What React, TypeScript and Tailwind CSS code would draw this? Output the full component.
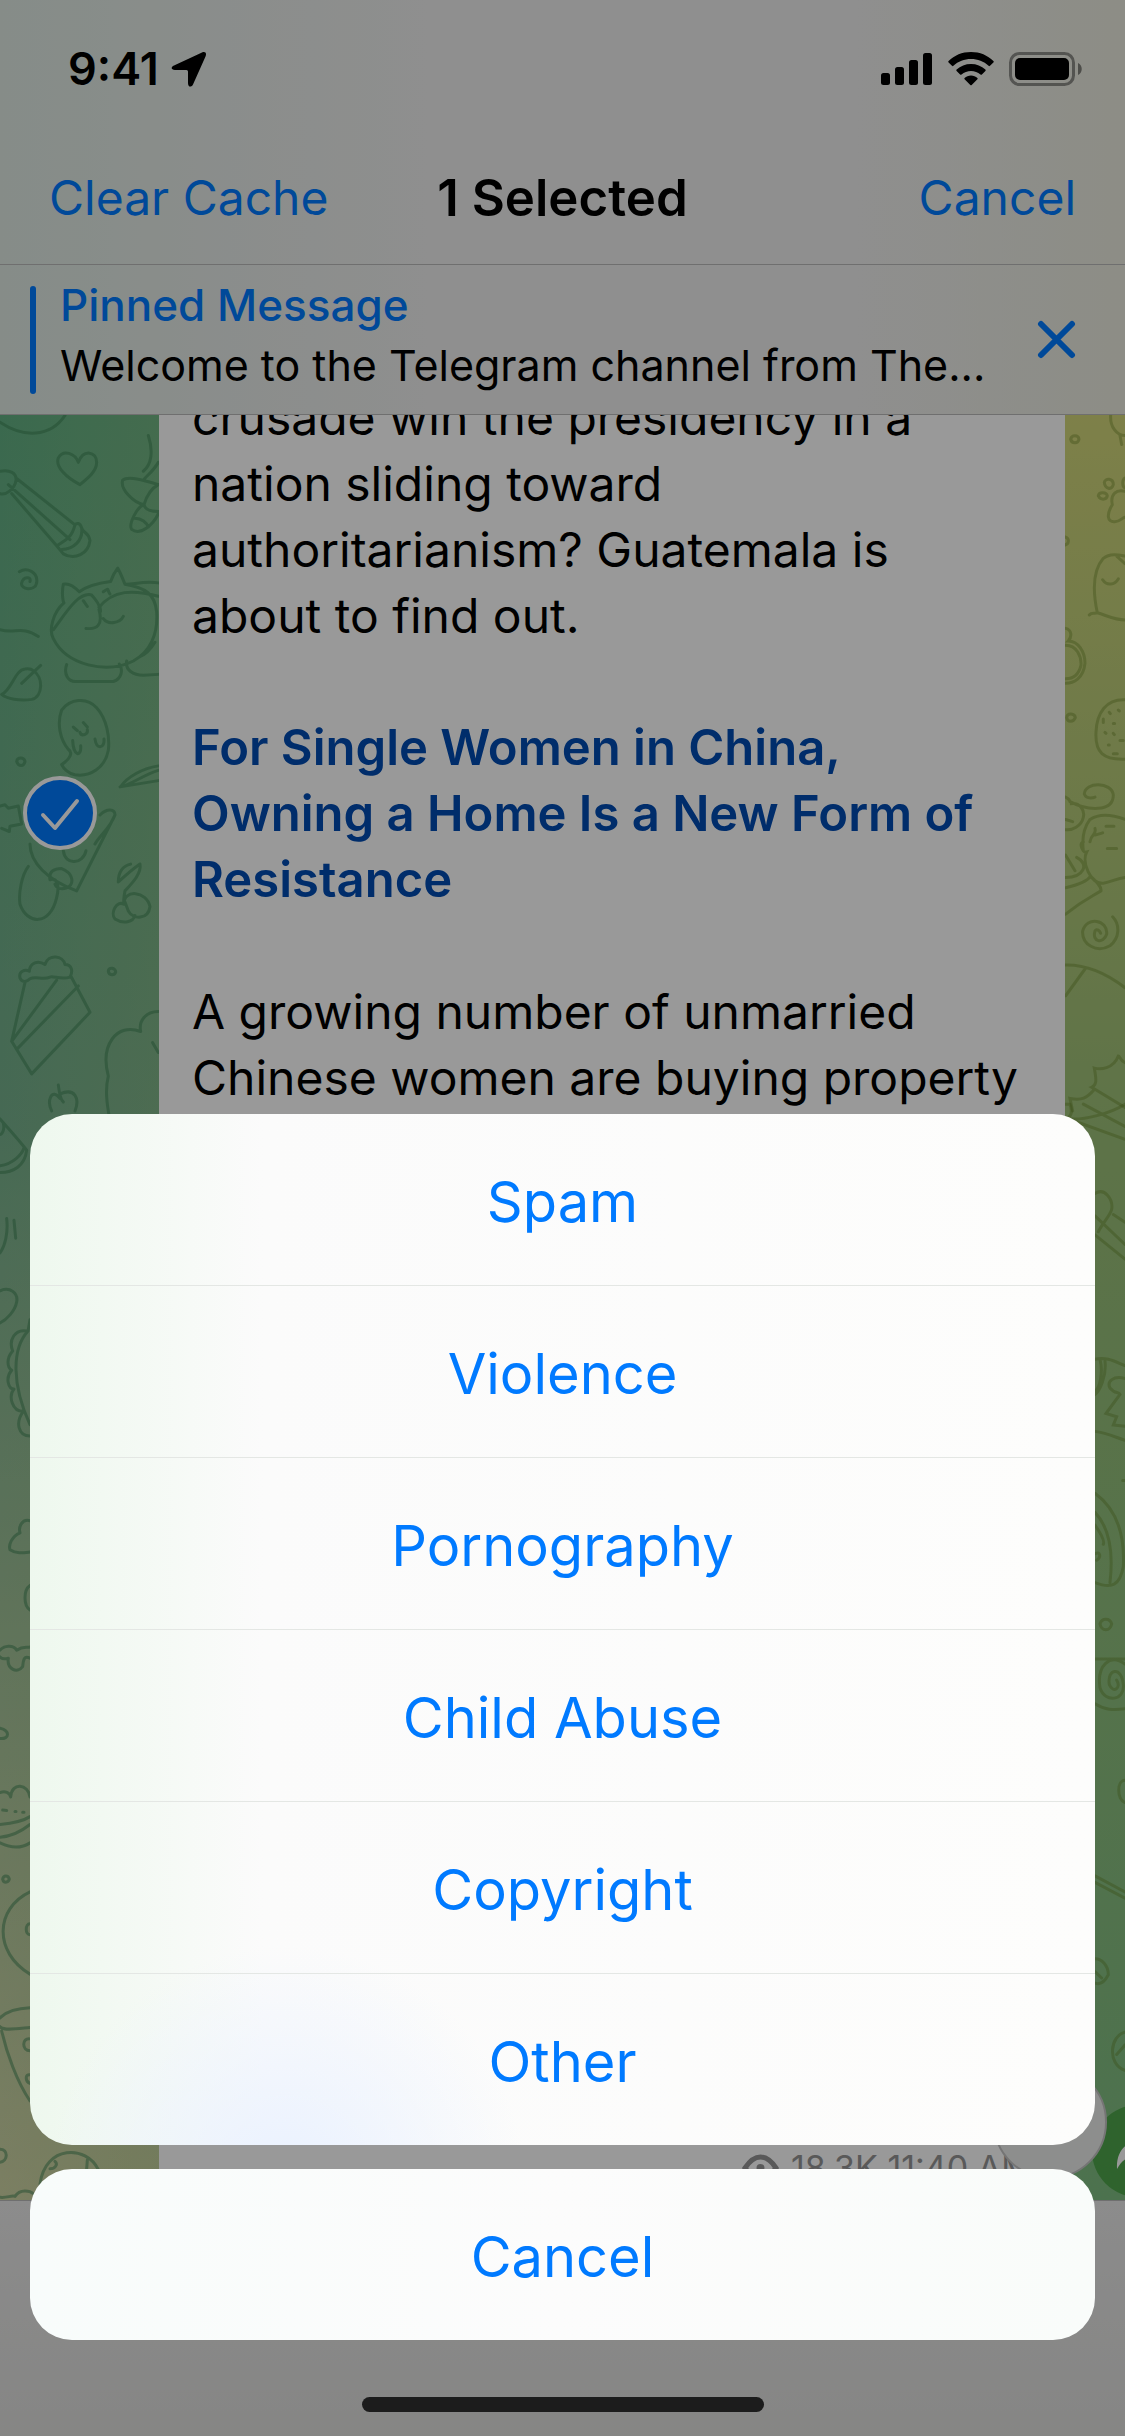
import { useState } from 'react';

const reasons = ['Spam', 'Violence', 'Pornography', 'Child Abuse', 'Copyright', 'Other'];

const StatusBar = () => (
  <div className="flex h-[138px] items-center justify-between pl-[68px] pr-[42px]">
    <div className="flex items-center gap-3">
      <span className="text-[45px] leading-[52px] font-semibold">9:41</span>
      <svg width="36" height="36" viewBox="0 0 36 36" aria-hidden="true">
        <path
          d="M31 1.5 3 14.5C-.5 16.200 0 19 4 19H15.500Q17 19 17 20.500V32C17 36.500 20.500 36.500 22 33.500L34.500 5.500C36 2 34 0 31 1.500Z"
          fill="#000"
        />
      </svg>
    </div>
    <div className="flex items-center gap-[15px]">
      <svg width="52" height="34" viewBox="0 0 52 34" aria-hidden="true">
        <rect x="0" y="21" width="9" height="12" rx="2.500" />
        <rect x="14" y="15" width="9" height="18" rx="2.500" />
        <rect x="28" y="8" width="9" height="25" rx="2.500" />
        <rect x="42" y="1" width="9" height="32" rx="2.500" />
      </svg>
      <svg width="46" height="34" viewBox="0 0 46 34" aria-hidden="true">
        <path d="M23 0C14 0 6.500 3.300.600 9a1 1 0 0 0 0 1.400L4 13.800a1 1 0 0 0 1.400 0C10.200 9.300 16.300 7 23 7s12.800 2.300 17.600 6.800a1 1 0 0 0 1.400 0l3.400-3.400a1 1 0 0 0 0-1.400C39.500 3.300 32 0 23 0Z" />
        <path d="M23 12c-5.500 0-10.500 2-14.400 5.600a1 1 0 0 0 0 1.400l3.500 3.500a1 1 0 0 0 1.400 0C16.200 20.200 19.500 19 23 19s6.800 1.200 9.500 3.500a1 1 0 0 0 1.400 0l3.500-3.500a1 1 0 0 0 0-1.400C33.500 14 28.500 12 23 12Z" />
        <path d="M23 23.500c-2.500 0-4.700.900-6.400 2.400a1 1 0 0 0 0 1.400l5.700 5.700a1 1 0 0 0 1.400 0l5.700-5.700a1 1 0 0 0 0-1.400c-1.700-1.500-3.900-2.400-6.400-2.400Z" />
      </svg>
      <svg width="74" height="34" viewBox="0 0 74 34" aria-hidden="true">
        <rect x="1.500" y="1.500" width="63" height="31" rx="9" fill="none" stroke="#000" strokeOpacity=".4" strokeWidth="3" />
        <rect x="6" y="6" width="54" height="22" rx="5" />
        <path d="M69 11c5 2 5 10 0 12Z" fillOpacity=".45" />
      </svg>
    </div>
  </div>
);

const Wallpaper = () => (
  <div className="absolute inset-0 flex justify-between" aria-hidden="true">
    <div className="w-1/2 bg-linear-to-b from-[#62b083] via-[#76b08c] to-[#ced4a4] via-40%">
      <svg
        width="159"
        height="1786"
        viewBox="0 414 159 1786"
        fill="none"
        stroke="#3a7f52"
        strokeOpacity=".5"
        strokeLinecap="round"
        strokeLinejoin="round"
        className="[&_path]:[stroke-width:3px] [&_path]:[vector-effect:non-scaling-stroke]"
      >
        <rect x="0" y="414" width="159" height="1786" fill="url(#leftGlow)" stroke="none" />
        <defs>
          <linearGradient id="leftGlow">
            <stop offset="0" stopColor="#a0c080" stopOpacity="0" />
            <stop offset="1" stopColor="#a0c080" stopOpacity=".25" />
          </linearGradient>
        </defs>
        <g transform="translate(0 410) scale(.3333 .4464)">
          <path d="M0 25C70 60 150 60 195 10M240 165C200 150 165 125 175 105C190 85 225 95 235 115C250 85 290 90 290 115C290 135 265 150 240 165Z" />
          <path d="M0 135C30 130 50 140 48 155C45 175 15 190 0 185M48 150L225 255M35 185L170 302M25 165L210 288M225 255C215 285 195 290 170 302L190 320C225 335 265 320 270 290C265 270 250 275 245 262C240 250 230 250 225 255M245 262C250 290 220 310 185 310" />
          <path d="M445 55C460 90 455 120 430 135M475 115C460 135 440 145 430 155M475 165C430 155 385 145 368 155C360 175 400 205 432 210C440 190 450 175 475 165M475 225C450 225 435 220 432 210C410 215 385 255 395 265C420 280 460 255 475 230M405 240C425 240 440 250 445 260" />
          <path d="M58 360C80 350 115 360 110 385C105 405 60 400 65 385C70 370 95 370 90 382M0 490C45 500 65 480 115 505" />
          <path d="M475 385C430 380 395 390 375 388C365 370 360 360 353 352C340 365 335 375 332 382C300 385 265 390 238 405C225 395 205 385 190 388C185 405 188 425 192 430C160 450 145 490 160 510C200 570 320 590 400 560C450 540 475 500 470 450C465 410 435 395 375 388M160 490C200 450 235 405 275 412C290 425 300 435 297 440C340 400 400 400 475 415M310 405C330 395 320 400 330 410M250 425L262 438M298 435C305 450 300 455 297 445C310 480 290 490 258 487M310 465C325 480 360 475 370 460M200 568C190 590 205 608 230 606H340C365 600 370 580 358 567M380 560C375 580 400 592 430 592L475 590M420 550C440 545 455 530 465 518" />
          <path d="M65 610L122 570M100 582C130 595 130 640 95 646C60 650 20 645 5 635C35 625 45 580 75 578C85 577 95 578 100 582" />
          <path d="M185 792C210 780 220 765 205 758C180 735 170 700 185 670C210 645 260 640 290 665C320 690 330 730 325 760C315 800 270 820 225 815C205 812 190 800 185 792M220 708L232 716M250 698L262 708M240 720C245 730 265 725 262 714M218 738C220 775 245 775 242 750M285 735C290 760 315 755 312 735" />
          <path d="M50 785C52 775 72 775 75 785C72 797 55 797 50 785M475 795C430 800 380 820 362 842C400 835 430 815 475 805M360 842L475 828" />
          <path d="M0 885L15 882L25 890L55 885L60 905L65 925L30 930L28 942L5 935M90 970C90 1010 140 1050 230 1075L345 905C345 890 320 890 300 905M345 905C330 935 300 950 285 970M85 1020C65 1040 55 1080 60 1105C80 1150 150 1155 170 1090C180 1060 170 1045 150 1050C145 1030 165 1025 185 1025C220 1035 225 1060 200 1068C185 1072 170 1070 165 1060M190 985C195 1020 250 1015 258 985" />
          <path d="M375 1075C400 1055 425 1035 420 1015C400 1025 385 1035 355 1055C355 1035 365 1020 392 1015M375 1075C370 1095 370 1100 372 1105C350 1095 330 1125 345 1138C370 1150 400 1145 405 1130M372 1105C370 1070 440 1075 450 1110C445 1140 400 1140 385 1120L375 1100" />
          <path d="M60 1270C55 1255 75 1250 88 1255C90 1235 115 1230 135 1240C145 1215 190 1220 195 1240C215 1240 220 1255 210 1268C185 1275 160 1265 150 1268C130 1275 105 1265 90 1272C80 1280 65 1280 60 1270M75 1280L35 1412L95 1485L270 1347L212 1265M35 1412L170 1275M50 1430L235 1288" />
          <path d="M325 1255C325 1245 348 1247 347 1257C343 1265 327 1265 325 1255M475 1345C440 1345 415 1365 422 1390C350 1370 300 1420 325 1490C315 1520 320 1550 330 1590M458 1415L475 1437" />
          <path d="M175 1510C180 1540 185 1545 190 1548M180 1540C155 1515 140 1545 155 1568M180 1530C225 1515 240 1540 225 1568" />
        </g>
        <g transform="translate(0 1080) scale(.3333 .4464)">
          <path d="M0 85C30 110 70 145 80 155C75 190 40 205 0 205M0 190C40 185 65 165 72 150M10 95C15 110 5 120 0 120M20 308C25 340 15 370 0 385M42 312L47 352M0 470C30 460 55 475 50 495C45 515 20 535 0 542" />
          <path d="M90 535L84 560C35 600 35 680 90 770M80 560C45 555 25 580 38 605C20 620 20 640 35 648C15 665 25 690 42 690C25 705 35 740 70 740C45 765 55 795 90 795M90 985C65 980 55 1000 60 1012C35 1020 25 1040 30 1050C50 1060 70 1057 90 1055M90 1130C70 1140 70 1175 90 1185" />
          <path d="M0 1275C10 1265 40 1262 50 1275C70 1265 80 1270 90 1268M90 1293C70 1285 70 1300 68 1312C50 1330 20 1315 25 1293C15 1295 5 1295 0 1290M0 1450C30 1455 30 1475 0 1473" />
        </g>
        <g transform="translate(0 1750) scale(.3333 .4375)">
          <path d="M0 95C15 90 30 95 32 105C35 70 85 75 90 105M0 168C40 165 70 160 90 150M0 197C40 195 70 180 90 168M0 210C40 225 70 220 90 210M8 135L20 136M45 138H48M68 140H72M8 293C10 283 25 283 28 293C25 302 10 302 8 293M90 322C-15 360-20 460 90 510M90 395C75 395 75 420 90 420M0 610C20 595 55 588 90 587M0 630C10 640 50 635 90 632M5 640C20 690 50 755 90 800M90 658C65 655 65 685 90 685M90 740C75 738 75 755 90 760" />
          <path d="M120 990C135 900 260 900 295 957M150 955C165 955 175 945 165 938M262 935L260 955M0 910C25 910 25 938 0 940M0 1020C20 1022 35 1015 45 1018C60 1000 90 1005 100 1012" />
        </g>
      </svg>
    </div>
    <div className="flex w-1/2 justify-end bg-linear-to-b from-[#d2d67a] via-[#9cc078] to-[#7fbf83] via-40%">
      <svg
        width="60"
        height="1786"
        viewBox="1065 414 60 1786"
        fill="none"
        stroke="#5c7a1e"
        strokeOpacity=".35"
        strokeLinecap="round"
        className="[&_path]:[stroke-width:3px] [&_path]:[vector-effect:non-scaling-stroke]"
      >
        <g transform="translate(900 410) scale(.3333 .4464)">
          <path d="M632 10C630 35 650 55 675 55M660 55L665 75M512 63C515 53 535 53 537 63C535 74 515 74 512 63M613 160C615 150 640 150 640 165C635 178 615 175 613 160M595 190C597 180 620 182 622 190C620 200 600 200 595 190M675 150C665 155 667 170 675 172M675 180C650 175 630 185 637 210C620 230 620 250 645 248C660 248 665 240 675 238M495 282C510 285 507 298 495 300" />
          <path d="M568 457C575 450 585 455 592 452C580 410 575 360 610 330C630 318 655 322 675 325M650 325L675 342M592 452C620 458 645 468 675 468M608 378C620 392 645 390 655 376M497 487C515 490 517 505 505 515C535 515 555 540 555 565C550 600 520 610 497 610M497 525C530 525 545 550 543 570C535 595 515 600 497 600M500 687C502 675 525 677 526 687C520 698 503 698 500 687" />
          <path d="M675 647C620 645 590 675 588 720C585 765 610 782 675 780M628 675L631 678M655 670L658 672M640 700H644M615 720L618 722M640 722L643 725M660 738H670M625 748H628M640 768H652M610 690V698" />
          <path d="M497 865C512 870 512 880 510 880C540 875 555 895 550 910C545 930 515 940 497 938M497 915L518 920M510 875C560 895 640 900 640 860C635 830 555 830 553 858C560 872 585 865 585 865M675 915C640 905 600 900 570 915C550 935 545 955 550 985M550 965C535 970 550 990 560 988C545 1010 570 1060 610 1058C635 1055 650 1047 675 1045M570 965C575 945 590 950 585 935M585 950L608 945M618 930H642M622 980H650M530 1000C570 1015 550 1045 497 1045M497 1068C545 1060 565 1050 572 1042C590 1055 605 1065 603 1075C570 1090 550 1095 497 1127M497 995L525 1030" />
          <path d="M638 1133C660 1150 660 1180 630 1198C590 1215 545 1195 548 1165C560 1130 625 1140 620 1172C610 1195 575 1190 585 1165C590 1158 600 1165 602 1170M497 1241C560 1240 620 1260 675 1292M497 1310L555 1250M675 1460C660 1455 660 1445 655 1445C640 1475 600 1475 583 1472C590 1500 590 1510 575 1515L675 1560M583 1520C560 1540 545 1545 510 1540L518 1568" />
        </g>
        <g transform="translate(1050 1100) scale(.3333 .6378)">
          <path d="M45 5H60C70 20 60 25 50 27L225 60M60 28C100 30 180 20 225 5M100 5L225 40M135 145C165 135 190 155 185 170C180 180 160 190 145 205M135 180L225 225M135 210L225 248M190 178L225 190" />
          <path d="M135 405C170 400 200 410 225 415M150 405C160 425 150 450 135 455M165 408C170 430 150 455 135 460M135 518C170 520 200 528 225 532M225 435C190 430 170 440 180 450C195 460 205 455 210 460L168 490L200 495L190 508L225 510M218 595H225M135 615C200 640 225 680 220 730C210 760 185 765 135 755M135 645C180 670 190 710 180 755M135 665C155 680 165 690 160 695M135 710C150 705 155 715 140 720" />
          <path d="M150 820C155 810 180 810 185 820C180 832 155 832 150 820M135 875H225M135 945C165 955 190 955 225 953M225 883C180 865 140 885 150 920C165 945 225 940 220 915C215 885 170 890 178 915C190 930 215 920 200 908M225 1065C200 1065 200 1095 225 1100M135 1215L225 1240M135 1225L225 1250M135 1345C155 1345 175 1355 175 1370C160 1385 145 1385 135 1383M135 1365L155 1375M225 1460C180 1465 170 1510 225 1520M225 1480L200 1495" />
        </g>
      </svg>
    </div>
  </div>
);

export default function App() {
  const [selected, setSelected] = useState(true);

  return (
    <div className="relative flex min-h-screen flex-col overflow-hidden bg-white font-['Inter','Liberation_Sans',sans-serif] text-black">
      {/* Header */}
      <header className="relative z-10 bg-[linear-gradient(to_right,#dfeae3,#eeeeee_38%,#eeeeee_76%,#ebecdf)]">
        <StatusBar />
        <div className="grid h-[127px] grid-cols-[1fr_auto_1fr] items-center border-b border-[#b9b9b9] px-[49px] pb-[6px] text-[48px]">
          <button className="justify-self-start text-[#007aff]">Clear Cache</button>
          <h1 className="text-[51px] font-semibold">1 Selected</h1>
          <button className="justify-self-end text-[#007aff]">Cancel</button>
        </div>
        <div className="flex h-[150px] items-center border-b border-[#b9b9b9] pl-[30px] pr-[49px]">
          <div className="h-[108px] w-[6px] rounded-full bg-[#007aff]" />
          <div className="ml-6 min-w-0 flex-1 pb-[10px] text-[43px] leading-[60px]">
            <p className="text-[44px] font-medium text-[#007aff]">Pinned Message</p>
            <p className="whitespace-nowrap">Welcome to the Telegram channel from The...</p>
          </div>
          <button aria-label="Close pinned message">
            <svg width="39" height="39" viewBox="0 0 39 39" stroke="#007aff" strokeWidth="6" strokeLinecap="round">
              <path d="M4 4l31 31M35 4 4 35" />
            </svg>
          </button>
        </div>
      </header>

      {/* Chat */}
      <main className="relative flex min-h-0 flex-1 overflow-hidden">
        <Wallpaper />
        <div className="relative w-[159px] shrink-0 pl-[23px] pt-[361px]">
          <label className="relative block size-[74px]">
            <input
              type="checkbox"
              aria-label="Select message"
              checked={selected}
              onChange={() => setSelected(!selected)}
              className="block size-[74px] appearance-none rounded-full border-4 border-white checked:bg-[#007aff]"
            />
            <svg
              className="pointer-events-none absolute inset-0"
              width="74"
              height="74"
              viewBox="0 0 74 74"
              fill="none"
              stroke="#fff"
              strokeWidth="4"
              strokeLinecap="round"
              strokeLinejoin="round"
            >
              <path d="M20 39l12 13 22-27" />
            </svg>
          </label>
        </div>
        <article className="relative mr-[60px] -mt-[30px] flex min-w-0 flex-1 flex-col justify-between bg-white px-[33px] pb-3 text-[48px] leading-[66px] whitespace-nowrap">
          <div>
            <p>
              crusade win the presidency in a<br />
              nation sliding toward<br />
              authoritarianism? Guatemala is<br />
              about to find out.
            </p>
            <a href="#article" className="my-[66px] block text-[49px] font-semibold text-[#004bb2]">
              For Single Women in China,<br />
              Owning a Home Is a New Form of<br />
              Resistance
            </a>
            <p>
              A growing number of unmarried<br />
              Chinese women are buying property
            </p>
          </div>
          <div className="flex items-center justify-end gap-3 text-[34px] leading-10 text-[#959595]">
            <svg width="37" height="28" viewBox="0 0 37 28" fill="none" stroke="#959595" strokeWidth="5">
              <path d="M3 14C9 5 14 3 18.500 3S28 5 34 14C28 23 23 25 18.500 25S9 23 3 14Z" />
              <circle cx="18.500" cy="14" r="4" fill="#959595" stroke="none" />
            </svg>
            <span>18.3K 11:40 AM</span>
          </div>
        </article>
        <button
          aria-label="Share message"
          className="absolute -right-[59px] bottom-[3px] flex size-[92px] items-center bg-[#4fa54c] pl-6 rounded-full"
        >
          <svg width="46" height="40" viewBox="0 0 46 40" fill="#fff">
            <path d="M26 0 46 17 26 34V24C14 24 6 28 1 38C0 20 10 10 26 9Z" />
          </svg>
        </button>
        <button
          aria-label="Scroll to bottom"
          className="absolute right-[18px] bottom-[21px] size-[114px] rounded-full border-2 border-[#c4c4c4] bg-[#ecedeb]"
        />
      </main>

      <footer className="relative h-[236px] border-t border-[#b9b9b9] bg-linear-to-b from-[#e9e9e9] to-[#dfdfdd]" />

      {/* Report sheet */}
      <div className="absolute inset-0 z-20 flex flex-col justify-end bg-black/40 px-[30px]">
        <div className="overflow-hidden rounded-[42px] bg-[#fcfcfc] bg-[radial-gradient(circle_at_24%_104%,#e9f1ff_0,#e9f1ff00_240px),linear-gradient(to_right,#eef8ee,#fbfbfb_22%,#fdfdfc)]">
          {reasons.map((reason) => (
            <button
              key={reason}
              className="block h-[172px] w-full border-b border-[#e4e7e4] pt-1 text-center text-[56px] text-[#007aff] last:h-[171px] last:border-b-0"
            >
              {reason}
            </button>
          ))}
        </div>
        <button className="mt-6 h-[171px] w-full rounded-[42px] bg-linear-to-r from-[#f8fcfb] via-[#fcfcfc] to-[#f9fcfa] pt-1 text-[56px] text-[#007aff]">
          Cancel
        </button>
        <div className="mt-[57px] mb-6 h-[15px] w-[402px] self-center rounded-full bg-[#1c1c1c]" />
      </div>
    </div>
  );
}
